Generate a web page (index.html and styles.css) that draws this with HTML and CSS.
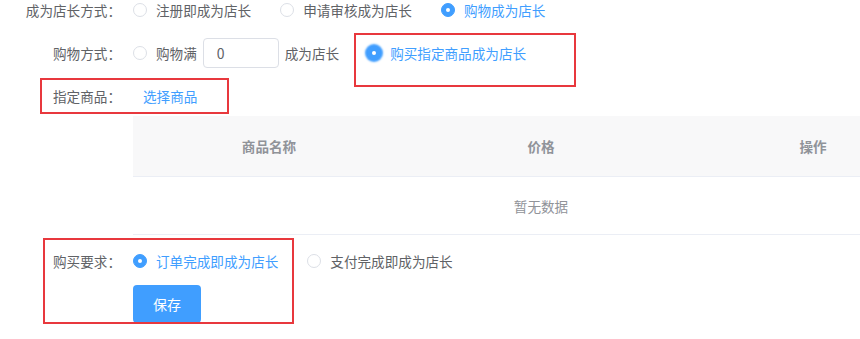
FILE: index.html
```html
<!DOCTYPE html>
<html lang="zh-CN">
<head>
    <meta charset="UTF-8">
    <meta name="viewport" content="width=device-width, initial-scale=1.0">
    <title>店长设置</title>
    <link rel="stylesheet" href="styles.css">
</head>
<body>
    <div class="page">
        <!-- 成为店长方式 -->
        <div class="form-item item-mode">
            <label class="form-label">成为店长方式：</label>
            <div class="form-content">
                <label class="radio"><span class="radio-inner"></span><span class="radio-text">注册即成为店长</span></label>
                <label class="radio"><span class="radio-inner"></span><span class="radio-text">申请审核成为店长</span></label>
                <label class="radio is-checked"><span class="radio-inner"></span><span class="radio-text">购物成为店长</span></label>
            </div>
        </div>

        <!-- 购物方式 -->
        <div class="form-item item-shop">
            <label class="form-label">购物方式：</label>
            <div class="form-content">
                <label class="radio radio-amount">
                    <span class="radio-inner"></span>
                    <span class="radio-text">购物满</span>
                    <input class="amount-input" type="text" value="0">
                    <span class="radio-text">成为店长</span>
                </label>
                <label class="radio is-checked is-focus"><span class="radio-inner"></span><span class="radio-text">购买指定商品成为店长</span></label>
            </div>
        </div>

        <!-- 指定商品 -->
        <div class="form-item item-goods">
            <label class="form-label">指定商品：</label>
            <div class="form-content">
                <a class="link" href="#">选择商品</a>
            </div>
        </div>

        <div class="table-wrap">
            <div class="goods-table">
                <div class="table-head">
                    <div class="cell">商品名称</div>
                    <div class="cell">价格</div>
                    <div class="cell">操作</div>
                </div>
                <div class="table-empty">暂无数据</div>
            </div>
        </div>

        <!-- 购买要求 -->
        <div class="form-item item-require">
            <label class="form-label">购买要求：</label>
            <div class="form-content">
                <label class="radio is-checked"><span class="radio-inner"></span><span class="radio-text">订单完成即成为店长</span></label>
                <label class="radio"><span class="radio-inner"></span><span class="radio-text">支付完成即成为店长</span></label>
            </div>
        </div>

        <div class="form-actions">
            <button class="btn-primary" type="button">保存</button>
        </div>

        <!-- 标注框 -->
        <div class="mark mark-shop"></div>
        <div class="mark mark-goods"></div>
        <div class="mark mark-require"></div>
    </div>
</body>
</html>
```

FILE: styles.css
```css
html, body {
    margin: 0;
    overflow: hidden;
    background-color: #fff;
}

body {
    font-family: "Noto Sans CJK SC", "Noto Sans", sans-serif;
    font-size: 13.6px;
    color: #606266;
}

.page {
    position: relative;
    width: 860px;
    height: 339px;
    overflow: hidden;
}

/* --- 表单行 --- */
.form-item {
    display: flex;
    align-items: center;
}

.form-label {
    width: 121px;
    padding-right: 12px;
    text-align: right;
    flex-shrink: 0;
    white-space: nowrap;
}

.form-content {
    display: flex;
    align-items: center;
    white-space: nowrap;
}

.item-mode {
    height: 20px;
}

.item-shop {
    height: 40px;
    margin-top: 13px;
}

.item-goods {
    height: 36px;
    margin-top: 5px;
}

.item-goods .form-content {
    padding-left: 10px;
}

.item-require {
    height: 40px;
    margin-top: 6px;
}

/* --- 单选框 --- */
.radio {
    display: flex;
    align-items: center;
    margin-right: 29px;
    cursor: pointer;
}

.radio-inner {
    width: 12px;
    height: 12px;
    border: 1px solid #dcdfe6;
    border-radius: 50%;
    position: relative;
    flex-shrink: 0;
}

.radio-text {
    margin-left: 9px;
}

.radio.is-checked .radio-inner {
    background-color: #409eff;
    border-color: #409eff;
}

.radio.is-checked .radio-inner::after {
    content: "";
    position: absolute;
    width: 4px;
    height: 4px;
    border-radius: 50%;
    background-color: #fff;
    left: 4px;
    top: 4px;
}

.radio.is-checked .radio-text {
    color: #409eff;
}

.radio.is-focus .radio-inner {
    box-shadow: 0 0 2px 2px #409eff;
}

.radio-amount {
    margin-right: 28px;
}

.amount-input {
    width: 76px;
    height: 30px;
    box-sizing: border-box;
    margin: 0 6px 0 6px;
    padding: 0 13px;
    border: 1px solid #dcdfe6;
    border-radius: 4px;
    font-family: inherit;
    font-size: 14px;
    color: #606266;
    outline: none;
}

.amount-input + .radio-text {
    margin-left: 0;
}

.link {
    color: #409eff;
    text-decoration: none;
}

/* --- 商品表格 --- */
.table-wrap {
    margin: 2px 0 0 133px;
    overflow: hidden;
}

.goods-table {
    width: 816px;
    border-bottom: 1px solid #ebeef5;
}

.table-head {
    display: grid;
    grid-template-columns: repeat(3, 1fr);
    height: 60px;
    background-color: #f8f8f9;
    border-bottom: 1px solid #ebeef5;
}

.table-head .cell {
    display: flex;
    align-items: center;
    justify-content: center;
    font-weight: bold;
    color: #909399;
}

.table-empty {
    height: 57px;
    display: flex;
    align-items: center;
    justify-content: center;
    color: #909399;
}

/* --- 按钮 --- */
.form-actions {
    margin: 4px 0 0 133px;
}

.btn-primary {
    height: 38px;
    padding: 0 20px;
    border: none;
    border-radius: 4px;
    background-color: #409eff;
    color: #fff;
    font-family: inherit;
    font-size: 14px;
    cursor: pointer;
}

/* --- 标注框 --- */
.mark {
    position: absolute;
    border: 2px solid #e8383d;
    box-sizing: border-box;
    pointer-events: none;
}

.mark-shop {
    left: 354px;
    top: 33px;
    width: 222px;
    height: 54px;
}

.mark-goods {
    left: 40px;
    top: 78px;
    width: 189px;
    height: 36px;
}

.mark-require {
    left: 43px;
    top: 238px;
    width: 251px;
    height: 86px;
}
```
